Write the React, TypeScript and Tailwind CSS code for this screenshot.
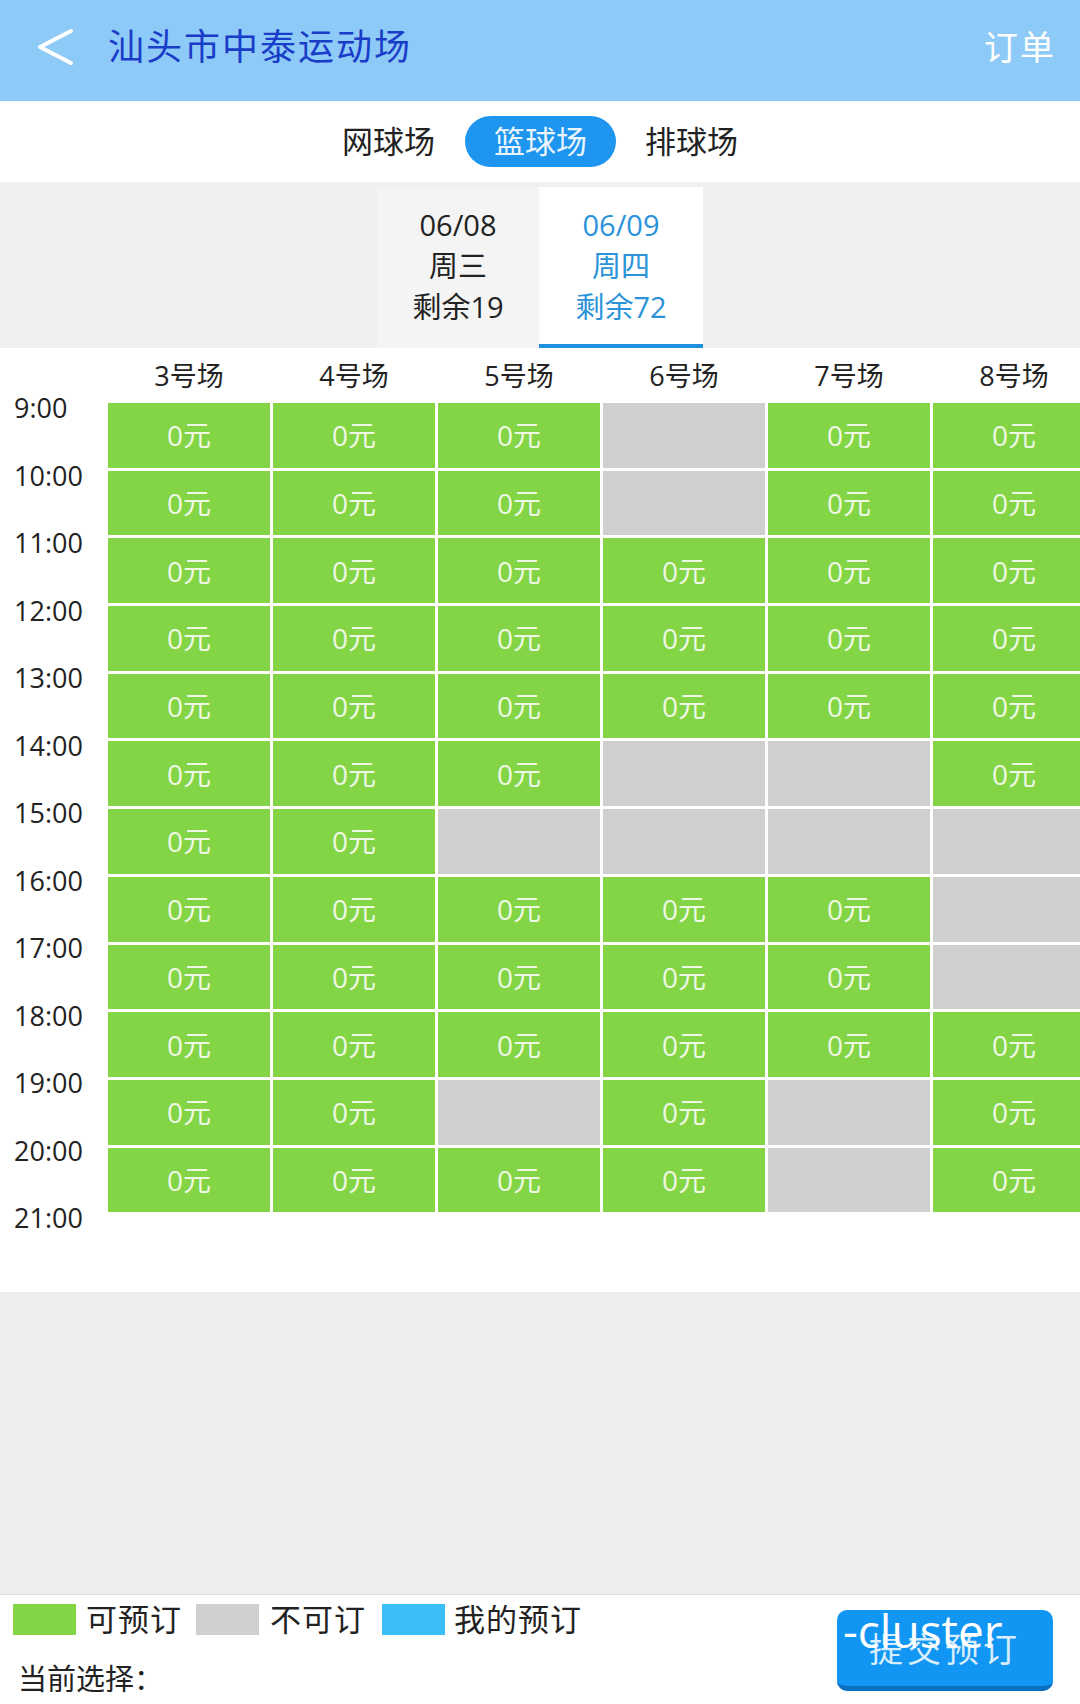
const courts = ["3号场", "4号场", "5号场", "6号场", "7号场", "8号场"];
const times = ["9:00", "10:00", "11:00", "12:00", "13:00", "14:00", "15:00", "16:00", "17:00", "18:00", "19:00", "20:00", "21:00"];

// 1 = bookable, 0 = not bookable
const slots: number[][] = [
  [1, 1, 1, 0, 1, 1],
  [1, 1, 1, 0, 1, 1],
  [1, 1, 1, 1, 1, 1],
  [1, 1, 1, 1, 1, 1],
  [1, 1, 1, 1, 1, 1],
  [1, 1, 1, 0, 0, 1],
  [1, 1, 0, 0, 0, 0],
  [1, 1, 1, 1, 1, 0],
  [1, 1, 1, 1, 1, 0],
  [1, 1, 1, 1, 1, 1],
  [1, 1, 0, 1, 0, 1],
  [1, 1, 1, 1, 0, 1],
];

const font = { fontFamily: '"Open Sans", "Noto Sans CJK SC", sans-serif' };

export default function App() {
  return (
    <div className="w-[1080px] h-[1704px] flex flex-col bg-white overflow-hidden text-[#222]" style={font}>
      {/* Header */}
      <div className="h-[101px] shrink-0 bg-[#8ECAF8] flex items-center pb-[7px]">
        <svg className="ml-[36px] w-[38px] h-[38px]" viewBox="0 0 38 38" fill="none" stroke="#ffffff" strokeWidth="4" strokeLinecap="round" strokeLinejoin="round">
          <path d="M35 3 L4 19 L35 35" />
        </svg>
        <div className="ml-[34px] text-[36px] tracking-[2px] text-[#1A3DC8] leading-none">汕头市中泰运动场</div>
        <div className="ml-auto mr-[24px] text-[34px] tracking-[2px] text-white leading-none">订单</div>
      </div>

      {/* Sport tabs */}
      <div className="h-[81px] shrink-0 flex items-center justify-center text-[31px]">
        <span className="leading-none">网球场</span>
        <span className="ml-[30px] w-[151px] h-[51px] rounded-full bg-[#1E95EE] text-[#EAF5FF] flex items-center justify-center leading-none">篮球场</span>
        <span className="ml-[29px] leading-none">排球场</span>
      </div>

      {/* Date tabs */}
      <div className="h-[166px] shrink-0 bg-[#EFEFEF] flex justify-center pt-[5px]">
        <div className="w-[162px] bg-[#F4F4F4] flex flex-col items-center justify-center text-[29px] leading-[41px] pb-[4px]">
          <span>06/08</span>
          <span>周三</span>
          <span>剩余19</span>
        </div>
        <div className="w-[164px] bg-white border-b-4 border-[#1E90E0] flex flex-col items-center justify-center text-[29px] leading-[41px] text-[#2A93DA]">
          <span>06/09</span>
          <span>周四</span>
          <span>剩余72</span>
        </div>
      </div>

      {/* Schedule */}
      <div className="h-[944px] shrink-0 flex bg-white">
        <div className="w-[108px] shrink-0 flex flex-col pt-[26px] pl-[14px]">
          {times.map((t) => (
            <div key={t} className="h-[67.5px] flex items-center text-[27px] leading-none">
              {t}
            </div>
          ))}
        </div>
        <div className="flex flex-col">
          <div className="h-[55px] grid grid-cols-[repeat(6,162px)] gap-x-[3px] items-center">
            {courts.map((c) => (
              <div key={c} className="text-center text-[27px] leading-none">
                {c}
              </div>
            ))}
          </div>
          <div className="grid grid-cols-[repeat(6,162px)] auto-rows-[64.7px] gap-[3px]">
            {slots.map((row, r) =>
              row.map((v, c) => (
                <div
                  key={`${r}-${c}`}
                  className={
                    v
                      ? "bg-[#83D545] flex items-center justify-center text-[28px] text-[#EEF8E4]"
                      : "bg-[#CFCFCF]"
                  }
                >
                  {v ? "0元" : ""}
                </div>
              ))
            )}
          </div>
        </div>
      </div>

      {/* Empty gray area */}
      <div className="h-[303px] shrink-0 bg-[#EEEEEE] border-b border-[#DCDCDC]" />

      {/* Footer */}
      <div className="flex-1 flex justify-between">
        <div className="flex flex-col pl-[13px] pt-[9px]">
          <div className="flex items-center text-[31px] leading-none tracking-[1px]">
            <span className="w-[63px] h-[31px] bg-[#83D545]" />
            <span className="ml-[10px]">可预订</span>
            <span className="ml-[14px] w-[63px] h-[31px] bg-[#CFCFCF]" />
            <span className="ml-[11px]">不可订</span>
            <span className="ml-[16px] w-[63px] h-[31px] bg-[#3BBFF8]" />
            <span className="ml-[9px]">我的预订</span>
          </div>
          <div className="mt-[29px] pl-[5px] text-[29px] leading-none">当前选择：</div>
        </div>
        <div className="relative mr-[27px] mt-[15px] w-[216px] h-[81px] rounded-[10px] bg-[#1196F3] border-b-[5px] border-[#0B6FBF] flex items-center justify-center text-[34px] text-[#D8EEFF] tracking-[4px] leading-none pt-[2px]">
          提交预订
          <span className="absolute left-[6px] top-[-3px] text-[46px] leading-none text-white tracking-normal" style={{ fontFamily: '"Open Sans", sans-serif' }}>
            -cluster
          </span>
        </div>
      </div>
    </div>
  );
}
